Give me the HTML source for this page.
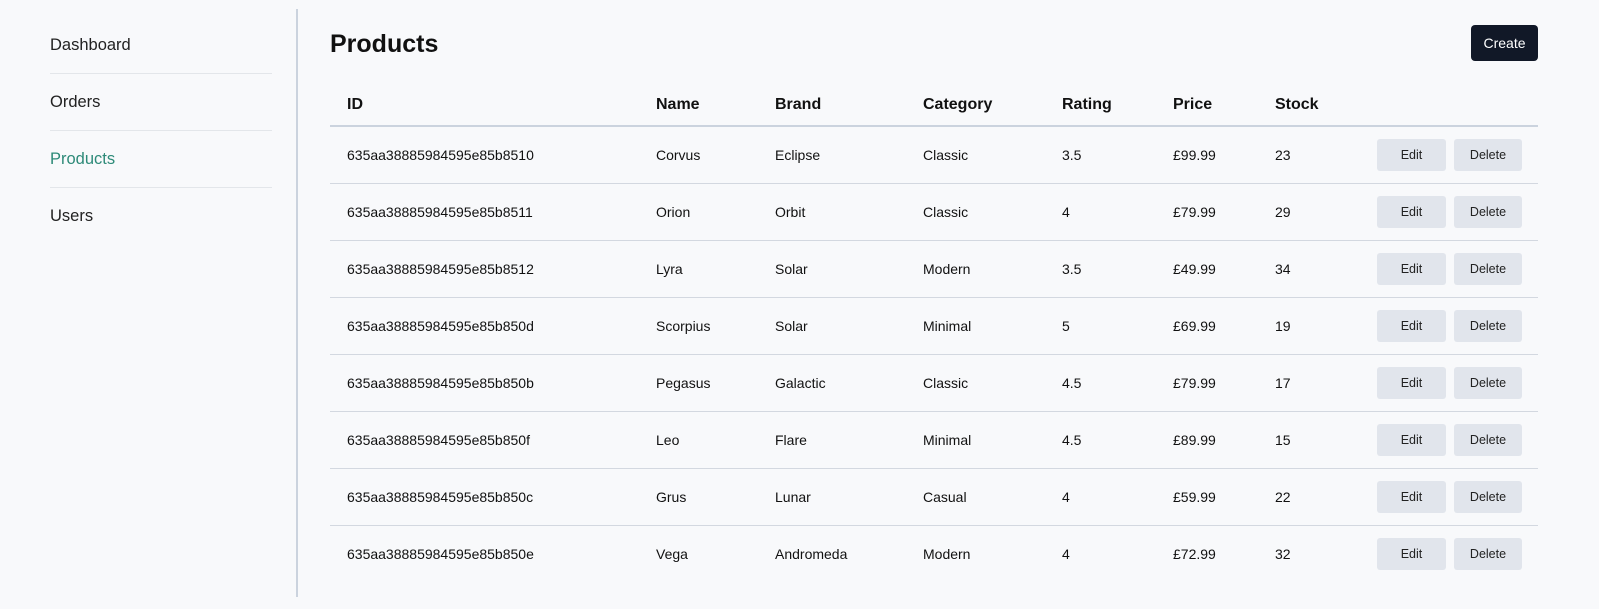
<!DOCTYPE html>
<html><head><meta charset="utf-8"><style>
*{box-sizing:border-box;margin:0;padding:0}
body{width:1599px;height:609px;background:#f8f9fb;font-family:"Liberation Sans",sans-serif;color:#111;position:relative;overflow:hidden}
.side{position:absolute;left:50px;top:17px;width:222px}
.side div{height:57px;line-height:56px;font-size:16.5px;border-bottom:1px solid #e3e6ea;color:#222}
.side div:last-child{border:none}
.vl{position:absolute;left:296px;top:9px;width:2px;height:588px;background:#cbd3de}
h1{position:absolute;left:330px;top:30px;font-size:25px;font-weight:bold;color:#111}
.create{position:absolute;left:1471px;top:25px;width:67px;height:36px;background:#111827;color:#fff;border-radius:4px;font-size:14px;text-align:center;line-height:36px}
table{position:absolute;left:330px;top:84px;width:1208px;border-collapse:collapse;font-size:14px}
th{text-align:left;font-weight:bold;font-size:16px;height:42px;border-bottom:2px solid #cbd3de;padding-left:17px}
td{height:57px;border-bottom:1px solid #d3d8e0;padding-left:17px}
td:last-child{text-align:right;padding-right:16px;padding-left:0}
tr:last-child td{border-bottom:none}
.b{display:inline-block;height:32px;line-height:32px;background:#e1e5ec;border-radius:3px;font-size:12.5px;text-align:center;color:#222;vertical-align:middle}
.e{width:69px}.d{width:68px;margin-left:8px}
</style></head><body>
<div class="side"><div>Dashboard</div><div>Orders</div><div style="color:#2d8a78">Products</div><div>Users</div></div>
<div class="vl"></div>
<h1>Products</h1>
<div class="create">Create</div>
<table>
<colgroup><col style="width:309px"><col style="width:119px"><col style="width:148px"><col style="width:139px"><col style="width:111px"><col style="width:102px"><col style="width:102px"><col></colgroup>
<tr><th>ID</th><th>Name</th><th>Brand</th><th>Category</th><th>Rating</th><th>Price</th><th>Stock</th><th></th></tr>
<tr><td>635aa38885984595e85b8510</td><td>Corvus</td><td>Eclipse</td><td>Classic</td><td>3.5</td><td>£99.99</td><td>23</td><td><span class="b e">Edit</span><span class="b d">Delete</span></td></tr>
<tr><td>635aa38885984595e85b8511</td><td>Orion</td><td>Orbit</td><td>Classic</td><td>4</td><td>£79.99</td><td>29</td><td><span class="b e">Edit</span><span class="b d">Delete</span></td></tr>
<tr><td>635aa38885984595e85b8512</td><td>Lyra</td><td>Solar</td><td>Modern</td><td>3.5</td><td>£49.99</td><td>34</td><td><span class="b e">Edit</span><span class="b d">Delete</span></td></tr>
<tr><td>635aa38885984595e85b850d</td><td>Scorpius</td><td>Solar</td><td>Minimal</td><td>5</td><td>£69.99</td><td>19</td><td><span class="b e">Edit</span><span class="b d">Delete</span></td></tr>
<tr><td>635aa38885984595e85b850b</td><td>Pegasus</td><td>Galactic</td><td>Classic</td><td>4.5</td><td>£79.99</td><td>17</td><td><span class="b e">Edit</span><span class="b d">Delete</span></td></tr>
<tr><td>635aa38885984595e85b850f</td><td>Leo</td><td>Flare</td><td>Minimal</td><td>4.5</td><td>£89.99</td><td>15</td><td><span class="b e">Edit</span><span class="b d">Delete</span></td></tr>
<tr><td>635aa38885984595e85b850c</td><td>Grus</td><td>Lunar</td><td>Casual</td><td>4</td><td>£59.99</td><td>22</td><td><span class="b e">Edit</span><span class="b d">Delete</span></td></tr>
<tr><td>635aa38885984595e85b850e</td><td>Vega</td><td>Andromeda</td><td>Modern</td><td>4</td><td>£72.99</td><td>32</td><td><span class="b e">Edit</span><span class="b d">Delete</span></td></tr>
</table>
</body></html>
